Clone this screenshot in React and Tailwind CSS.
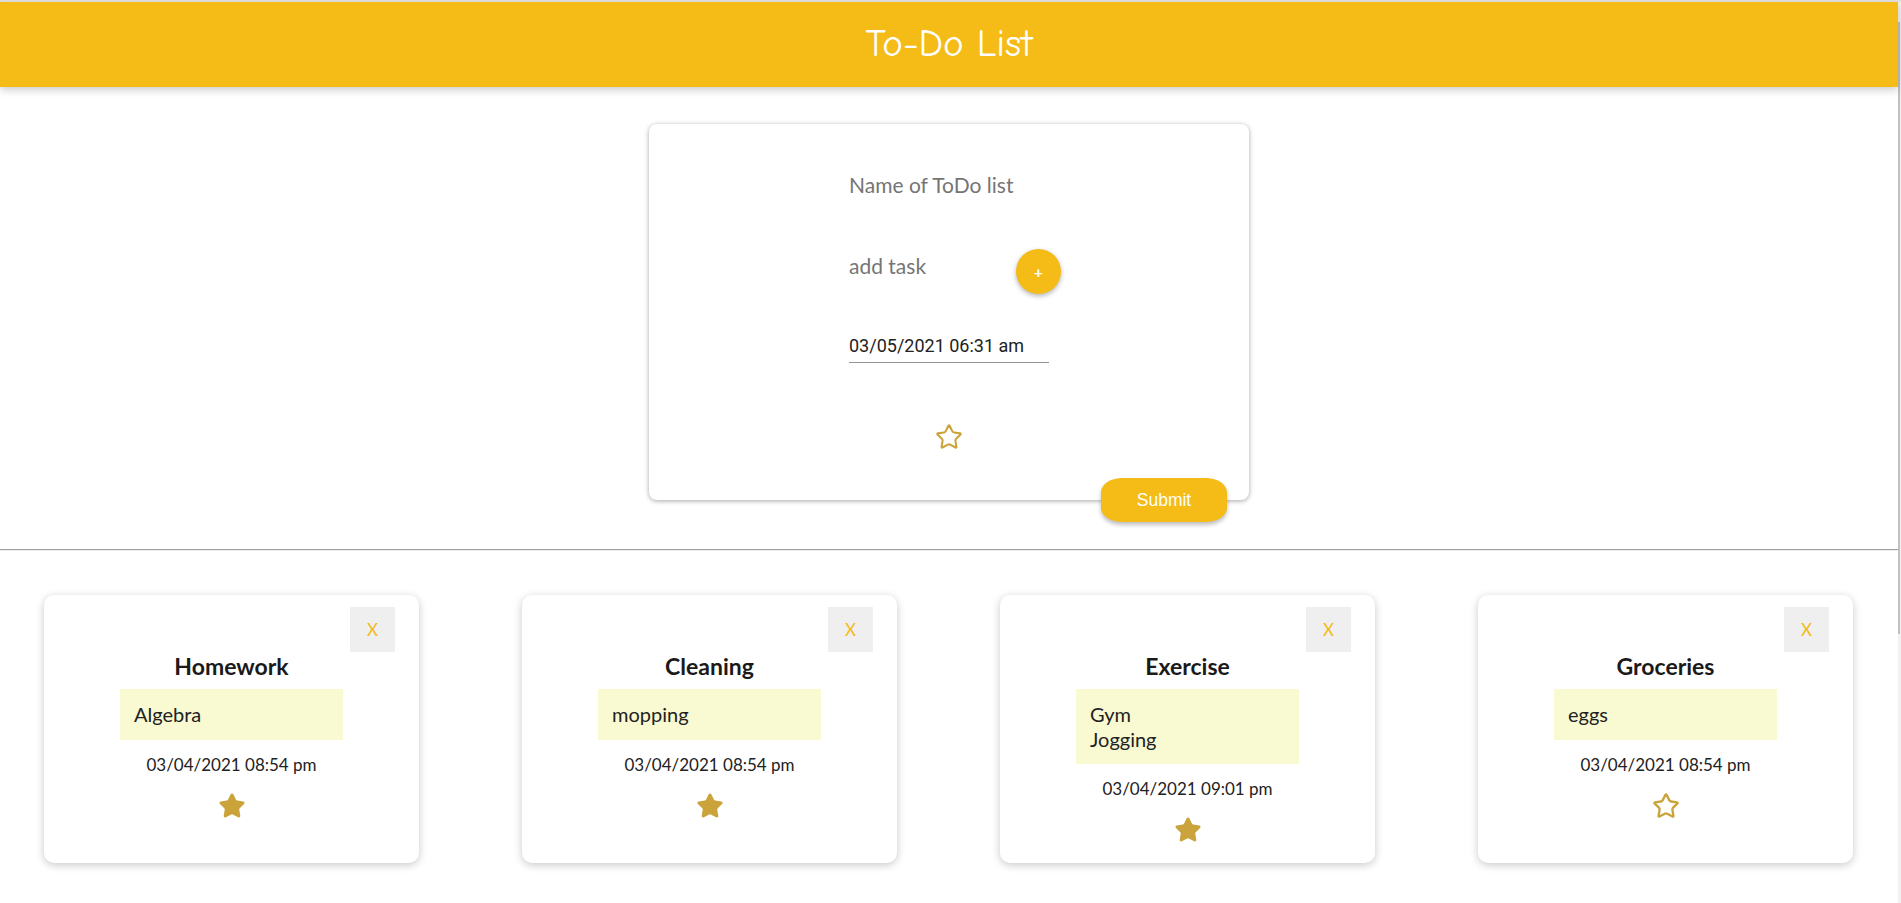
import React from 'react';
import { Star } from 'lucide-react';

const lists = [
  { id: 1, name: 'Homework', tasks: ['Algebra'], date: '03/04/2021 08:54 pm', fav: true },
  { id: 2, name: 'Cleaning', tasks: ['mopping'], date: '03/04/2021 08:54 pm', fav: true },
  { id: 3, name: 'Exercise', tasks: ['Gym', 'Jogging'], date: '03/04/2021 09:01 pm', fav: true },
  { id: 4, name: 'Groceries', tasks: ['eggs'], date: '03/04/2021 08:54 pm', fav: false },
];

const ListCard = ({ list }) => (
  <div className="w-[375px] h-[268px] bg-white rounded-[10px] shadow-[0_2px_8px_rgba(0,0,0,0.22)] flex flex-col items-center font-['Lato',sans-serif]">
    <div className="w-full flex justify-end pr-[24px] pt-[12px]">
      <button className="w-[45px] h-[45px] bg-[#efefef] text-[#f5b915] text-[17px] flex items-center justify-center">
        X
      </button>
    </div>
    <h2 className="text-[23px] leading-[29px] font-bold text-[#1a1a1a]">{list.name}</h2>
    <ul className="mt-[8px] w-[223px] bg-[#fafad2] py-[13px] pl-[14px] text-[20px] leading-[24.5px] text-[#222]">
      {list.tasks.map((t) => (
        <li key={t}>{t}</li>
      ))}
    </ul>
    <p className="mt-[14px] text-[17px] leading-[22px] text-[#222]">{list.date}</p>
    <div className="mt-[16px] text-[#cba33b]">
      {list.fav ? (
        <Star size={28} fill="currentColor" strokeWidth={1.5} />
      ) : (
        <Star size={28} strokeWidth={2} />
      )}
    </div>
  </div>
);

const App = () => {
  return (
    <div className="w-[1901px] h-[903px] overflow-hidden bg-white">
      <div className="h-[2px] bg-[#e2e2e2]" />
      <div className="flex">
        <div className="w-[1898px]">
          <header className="relative z-10 h-[85px] bg-[#f5bb16] shadow-[0_3px_8px_rgba(0,0,0,0.2)] flex items-center justify-center">
            <h1 className="text-white text-[39px] font-['Comic_Sans_MS','Comic_Neue',cursive]">To-Do List</h1>
          </header>

          <div className="flex justify-center mt-[37px]">
            <div className="relative w-[600px] h-[376px] bg-white rounded-[8px] shadow-[0_1px_5px_rgba(0,0,0,0.35)]">
              <div className="ml-[200px] flex flex-col font-['Lato',sans-serif]">
                <input
                  className="mt-[44px] w-[200px] h-[32px] text-[21px] text-[#222] placeholder:text-[#757575] outline-none"
                  placeholder="Name of ToDo list"
                />
                <div className="mt-[49px] flex items-start">
                  <input
                    className="w-[160px] h-[32px] text-[21px] text-[#222] placeholder:text-[#757575] outline-none"
                    placeholder="add task"
                  />
                  <button className="ml-[7px] w-[45px] h-[45px] rounded-full bg-[#f5bb16] text-white text-[16px] font-bold shadow-[0_2px_5px_rgba(0,0,0,0.3)] flex items-center justify-center">
                    +
                  </button>
                </div>
                <div className="mt-[35px] w-[200px] h-[34px] border-b border-[#949494] flex items-center font-['Roboto',sans-serif] text-[18px] text-[#222]">
                  03/05/2021 06:31 am
                </div>
              </div>
              <div className="mt-[60px] flex justify-center text-[#cba33b]">
                <Star size={28} strokeWidth={1.8} />
              </div>
              <button className="absolute left-[452px] top-[354px] w-[126px] h-[44px] rounded-[22px/14px] bg-[#f5bb16] text-white text-[17.5px] font-['Liberation_Sans',sans-serif] shadow-[0_3px_4px_rgba(0,0,0,0.25)]">
                Submit
              </button>
            </div>
          </div>

          <div className="mt-[49px] border-t border-[#9c9c9c] border-b border-b-[#eeeeee]" />

          <div className="mt-[44px] pl-[44px] flex gap-[103px]">
            {lists.map((l) => (
              <ListCard key={l.id} list={l} />
            ))}
          </div>
        </div>
        <div className="w-[3px] h-[901px] bg-[#f1f1f1] flex flex-col">
          <div className="mt-[20px] h-[612px] w-[2px] bg-[#c1c1c1]" />
        </div>
      </div>
    </div>
  );
};

export default App;
